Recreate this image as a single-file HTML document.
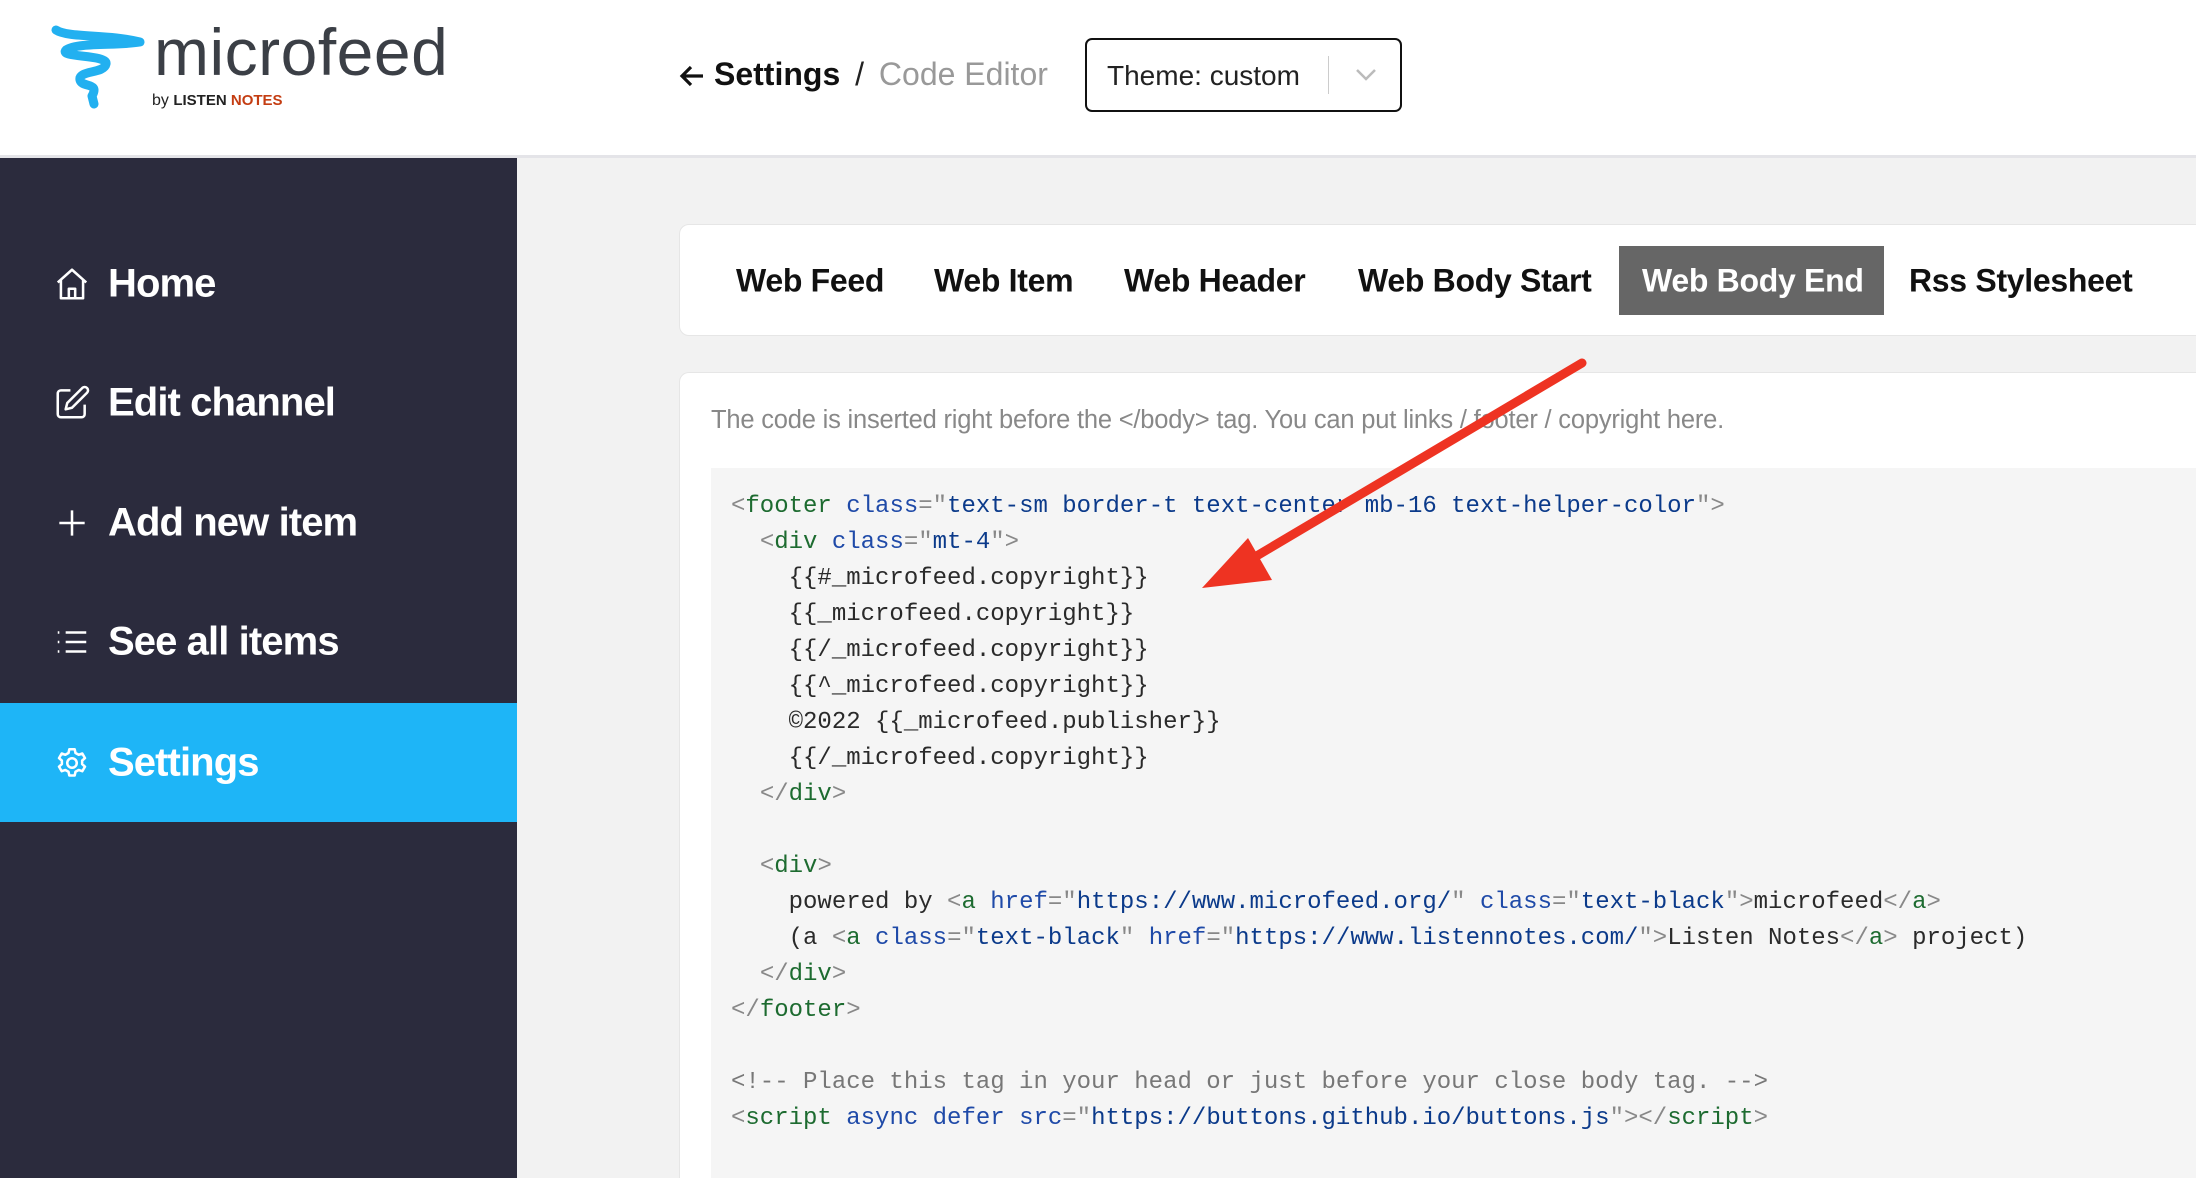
<!DOCTYPE html>
<html style="width:2196px;height:1178px;overflow:hidden"><head><meta charset="utf-8"><style>
*{margin:0;padding:0;box-sizing:border-box}
body{width:2196px;height:1178px;overflow:hidden;background:#f2f2f2;font-family:"Liberation Sans",sans-serif;position:relative}
.hdr{position:absolute;left:0;top:0;width:2196px;height:158px;background:#fff;border-bottom:3px solid #e4e4e8}
.side{position:absolute;left:0;top:158px;width:517px;height:1020px;background:#2b2b3d}
.item{position:absolute;left:0;width:517px;height:119px;color:#fff;font-weight:bold;font-size:40px;letter-spacing:-0.9px}
.item span{position:absolute;left:108px;top:50%;transform:translateY(-50%)}
.item svg{position:absolute;left:53px;top:50%;transform:translateY(-50%)}
.card{position:absolute;background:#fff;border-radius:10px}
.tab{position:absolute;top:281px;transform:translateY(-50%);font-weight:bold;font-size:32px;color:#111;letter-spacing:-0.3px}
.code{position:absolute;left:711px;top:468px;width:1485px;height:710px;background:#f5f5f5}
pre{position:absolute;left:731px;top:489px;font-family:"Liberation Mono",monospace;font-size:24px;line-height:36px;color:#2a2a2a}
.t{color:#1d6b30}.a{color:#1f4aa8}.s{color:#0b3a8a}.p{color:#888}.c{color:#777}
</style></head><body>
<div class="hdr">
<svg style="position:absolute;left:48px;top:24px" width="100" height="86" viewBox="0 0 100 86"><path d="M8 6 C20 14 60 10 92 18 C70 22 30 18 18 26 C10 34 60 30 58 40 C56 50 30 46 32 56 C34 64 52 58 44 72 L46 80" fill="none" stroke="#22b0f0" stroke-width="9" stroke-linecap="round" stroke-linejoin="round"/></svg>
<div style="position:absolute;left:154px;top:14px;font-size:66px;color:#3b3f46;letter-spacing:0.5px">microfeed</div>
<div style="position:absolute;left:152px;top:92px;font-size:16px;color:#222">by <b style="font-size:15px">LISTEN <span style="color:#c43d12">NOTES</span></b></div>
<svg style="position:absolute;left:679px;top:63px" width="26" height="26" viewBox="0 0 26 26"><path d="M24 13 H4 M12 4 L3 13 L12 22" fill="none" stroke="#111" stroke-width="3.2"/></svg>
<div style="position:absolute;left:714px;top:56px;font-size:32px;font-weight:bold;color:#111">Settings <span style="font-weight:normal;color:#222;margin:0 6px">/</span> <span style="font-weight:normal;color:#999">Code Editor</span></div>
<div style="position:absolute;left:1085px;top:38px;width:317px;height:74px;border:2.5px solid #111;border-radius:7px">
<div style="position:absolute;left:20px;top:20px;font-size:28px;color:#222">Theme: custom</div>
<div style="position:absolute;left:241px;top:16px;width:1px;height:38px;background:#ccc"></div>
<svg style="position:absolute;left:268px;top:28px" width="22" height="14" viewBox="0 0 22 14"><path d="M2 2 L11 11 L20 2" fill="none" stroke="#bbb" stroke-width="2.5"/></svg>
</div>
</div>
<div class="side">
<div class="item" style="top:66px"><svg width="38" height="38" viewBox="0 0 24 24" fill="none" stroke="#fff" stroke-width="1.6" stroke-linejoin="round"><path d="M3 11 L12 3 L21 11 M5 9.5 V21 H19 V9.5 M10 21 V15 H14 V21"/></svg><span>Home</span></div>
<div class="item" style="top:185px"><svg width="38" height="38" viewBox="0 0 24 24" fill="none" stroke="#fff" stroke-width="1.6" stroke-linejoin="round"><path d="M11 4 H5 a2 2 0 0 0 -2 2 V19 a2 2 0 0 0 2 2 H18 a2 2 0 0 0 2 -2 V13 M18.5 2.5 a2.1 2.1 0 0 1 3 3 L12 15 L8 16 L9 12 Z"/></svg><span>Edit channel</span></div>
<div class="item" style="top:305px"><svg width="38" height="38" viewBox="0 0 24 24" fill="none" stroke="#fff" stroke-width="1.6"><path d="M12 4 V20 M4 12 H20"/></svg><span>Add new item</span></div>
<div class="item" style="top:424px"><svg width="38" height="38" viewBox="0 0 24 24" fill="none" stroke="#fff" stroke-width="1.6"><path d="M8 6 H21 M8 12 H21 M8 18 H21 M3 6 H4 M3 12 H4 M3 18 H4"/></svg><span>See all items</span></div>
<div class="item" style="top:545px;background:#1eb5f7"><svg width="38" height="38" viewBox="0 0 24 24" fill="none" stroke="#fff" stroke-width="1.6" stroke-linejoin="round"><path d="M10.3 3.3 h3.4 l.5 2.4 l2 1.1 l2.3-.8 l1.7 2.9 l-1.8 1.6 v2.2 l1.8 1.6 l-1.7 2.9 l-2.3-.8 l-2 1.1 l-.5 2.4 h-3.4 l-.5-2.4 l-2-1.1 l-2.3.8 l-1.7-2.9 l1.8-1.6 v-2.2 l-1.8-1.6 l1.7-2.9 l2.3.8 l2-1.1 Z"/><circle cx="12" cy="12" r="3"/></svg><span>Settings</span></div>
</div>
<div class="card" style="left:679px;top:224px;width:1540px;height:112px;border:1px solid #e6e6e6"></div>
<div style="position:absolute;left:1619px;top:246px;width:265px;height:69px;background:#666"></div>
<div class="tab" style="left:736px">Web Feed</div>
<div class="tab" style="left:934px">Web Item</div>
<div class="tab" style="left:1124px">Web Header</div>
<div class="tab" style="left:1358px">Web Body Start</div>
<div class="tab" style="left:1642px;color:#fff">Web Body End</div>
<div class="tab" style="left:1909px">Rss Stylesheet</div>
<div class="card" style="left:679px;top:372px;width:1540px;height:806px;border:1px solid #e6e6e6;border-bottom:none;border-radius:10px 0 0 0"></div>
<div style="position:absolute;left:711px;top:406px;font-size:25.5px;color:#888;letter-spacing:-0.2px">The code is inserted right before the &lt;/body&gt; tag. You can put links / footer / copyright here.</div>
<div class="code"></div>
<pre><span class="p">&lt;</span><span class="t">footer</span> <span class="a">class</span><span class="p">="</span><span class="s">text-sm border-t text-center mb-16 text-helper-color</span><span class="p">"&gt;</span>
  <span class="p">&lt;</span><span class="t">div</span> <span class="a">class</span><span class="p">="</span><span class="s">mt-4</span><span class="p">"&gt;</span>
    {{#_microfeed.copyright}}
    {{_microfeed.copyright}}
    {{/_microfeed.copyright}}
    {{^_microfeed.copyright}}
    ©2022 {{_microfeed.publisher}}
    {{/_microfeed.copyright}}
  <span class="p">&lt;/</span><span class="t">div</span><span class="p">&gt;</span>

  <span class="p">&lt;</span><span class="t">div</span><span class="p">&gt;</span>
    powered by <span class="p">&lt;</span><span class="t">a</span> <span class="a">href</span><span class="p">="</span><span class="s">https://www.microfeed.org/</span><span class="p">"</span> <span class="a">class</span><span class="p">="</span><span class="s">text-black</span><span class="p">"&gt;</span>microfeed<span class="p">&lt;/</span><span class="t">a</span><span class="p">&gt;</span>
    (a <span class="p">&lt;</span><span class="t">a</span> <span class="a">class</span><span class="p">="</span><span class="s">text-black</span><span class="p">"</span> <span class="a">href</span><span class="p">="</span><span class="s">https://www.listennotes.com/</span><span class="p">"&gt;</span>Listen Notes<span class="p">&lt;/</span><span class="t">a</span><span class="p">&gt;</span> project)
  <span class="p">&lt;/</span><span class="t">div</span><span class="p">&gt;</span>
<span class="p">&lt;/</span><span class="t">footer</span><span class="p">&gt;</span>

<span class="c">&lt;!-- Place this tag in your head or just before your close body tag. --&gt;</span>
<span class="p">&lt;</span><span class="t">script</span> <span class="a">async defer src</span><span class="p">="</span><span class="s">https://buttons.github.io/buttons.js</span><span class="p">"&gt;&lt;/</span><span class="t">script</span><span class="p">&gt;</span></pre>
<svg style="position:absolute;left:0;top:0" width="2196" height="1178"><line x1="1582" y1="363" x2="1238" y2="567" stroke="#ee3322" stroke-width="9" stroke-linecap="round"/><polygon points="1202,588 1248,538 1272,580" fill="#ee3322"/></svg>
</body></html>
